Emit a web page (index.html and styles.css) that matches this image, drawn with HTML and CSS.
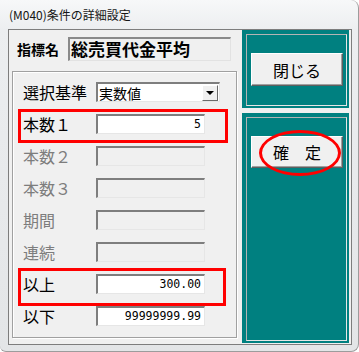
FILE: index.html
```html
<!DOCTYPE html>
<html lang="ja">
<head>
<meta charset="utf-8">
<title>(M040)条件の詳細設定</title>
<link rel="stylesheet" href="styles.css">
</head>
<body>
<div class="window">
  <div class="titlebar">(M040)条件の詳細設定</div>
  <div class="client">
    <div class="left">
      <div class="name-row">
        <span class="name-label">指標名</span>
        <div class="name-field">総売買代金平均</div>
      </div>
      <div class="group">
        <div class="row">
          <span class="label">選択基準</span>
          <div class="combo"><span class="combo-text">実数値</span><span class="drop"><span class="tri"></span></span></div>
        </div>
        <div class="row mark-a">
          <span class="label">本数１</span>
          <div class="field">5</div>
        </div>
        <div class="row">
          <span class="label off">本数２</span>
          <div class="field disabled"></div>
        </div>
        <div class="row">
          <span class="label off">本数３</span>
          <div class="field disabled"></div>
        </div>
        <div class="row">
          <span class="label off">期間</span>
          <div class="field disabled"></div>
        </div>
        <div class="row">
          <span class="label off">連続</span>
          <div class="field disabled"></div>
        </div>
        <div class="row mark-b">
          <span class="label">以上</span>
          <div class="field">300.00</div>
        </div>
        <div class="row">
          <span class="label">以下</span>
          <div class="field">99999999.99</div>
        </div>
      </div>
    </div>
    <div class="right">
      <div class="panel panel-top">
        <div class="panel-inner">
          <button class="btn btn-close">閉じる</button>
        </div>
      </div>
      <div class="panel panel-bottom">
        <div class="panel-inner">
          <button class="btn btn-ok">確　定</button>
          <div class="ellipse"></div>
        </div>
      </div>
    </div>
  </div>
</div>
</body>
</html>
```
FILE: styles.css
```css
* { box-sizing: border-box; }
html, body { margin: 0; padding: 0; }
body {
  width: 359px;
  height: 352px;
  overflow: hidden;
  background: #ffffff;
  font-family: "Noto Sans CJK JP", "Noto Sans", sans-serif;
}
.window {
  width: 359px;
  height: 352px;
  display: flex;
  flex-direction: column;
  background: linear-gradient(#f7f8f9, #eceef0 30px, #e3e5e7);
  border-right: 1px solid #9c9c9c;
  border-bottom: 1px solid #9c9c9c;
  border-radius: 0 8px 8px 6px;
}
.titlebar {
  height: 29px;
  flex: none;
  display: flex;
  align-items: center;
  padding-left: 9px;
  font-size: 12px;
  color: #151515;
}
.client {
  flex: 1;
  display: flex;
  margin: 0 6px 6px 8px;
  background: #f0f0f0;
  border: 1px solid #7d7d7d;
}
.left {
  width: 233px;
  padding-left: 3px;
}
.name-row {
  display: flex;
  align-items: center;
  height: 24px;
  margin-top: 7px;
}
.name-label {
  width: 56px;
  padding-left: 5px;
  font-size: 14px;
  font-weight: 700;
  line-height: 1;
}
.name-field {
  width: 163px;
  height: 24px;
  border-style: solid;
  border-width: 2px 1px 1px 2px;
  border-color: #8a8a8a #e2e2e2 #e2e2e2 #8a8a8a;
  font-size: 17px;
  font-weight: 700;
  line-height: 20px;
  padding-left: 1px;
  color: #000;
}
.group {
  margin-top: 10px;
  width: 225px;
  height: 267px;
  border: 1px solid #a0a0a0;
  box-shadow: inset 1px 1px 0 #ffffff, 1px 1px 0 #ffffff;
  padding-top: 4px;
}
.row {
  position: relative;
  height: 32px;
  display: flex;
  align-items: center;
  padding-left: 10px;
}
.label {
  width: 73px;
  font-size: 16px;
  line-height: 1;
  color: #000;
}
.label.off { color: #7d7d7d; }
.field {
  width: 109px;
  height: 20px;
  background: #ffffff;
  border-style: solid;
  border-width: 2px 1px 1px 2px;
  border-color: #7e7e7e #e6e6e6 #e6e6e6 #7e7e7e;
  font-family: "DejaVu Sans Mono", "Liberation Mono", monospace;
  font-size: 11.5px;
  line-height: 17px;
  text-align: right;
  padding-right: 3px;
  color: #000;
}
.field.disabled { background: #f0f0f0; }
.combo {
  width: 124px;
  height: 20px;
  display: flex;
  align-items: center;
  background: #ffffff;
  border-style: solid;
  border-width: 2px 1px 1px 2px;
  border-color: #7e7e7e #e6e6e6 #e6e6e6 #7e7e7e;
}
.combo-text {
  flex: 1;
  font-size: 14px;
  line-height: 1;
  padding-left: 1px;
}
.drop {
  width: 16px;
  height: 16px;
  margin-right: 1px;
  display: flex;
  align-items: center;
  justify-content: center;
  background: #f0f0f0;
  border-style: solid;
  border-width: 1px;
  border-color: #ffffff #6a6a6a #6a6a6a #ffffff;
}
.tri {
  width: 0;
  height: 0;
  border-left: 4px solid transparent;
  border-right: 4px solid transparent;
  border-top: 4px solid #000;
}
.mark-a::after, .mark-b::after {
  content: "";
  position: absolute;
  border: 3px solid #ff0000;
  left: 5px;
}
.mark-a::after { top: 1px; height: 28px; width: 204px; }
.mark-b::after { top: 0; height: 32px; width: 202px; }
.right {
  width: 107px;
  display: flex;
  flex-direction: column;
}
.panel {
  background: #008080;
  padding: 4px 2px 2px 4px;
}
.panel-top { height: 78px; }
.panel-bottom { flex: 1; margin-top: 5px; margin-bottom: 1px; }
.panel-inner {
  position: relative;
  height: 100%;
  border: 1px solid;
  border-color: #b4b4b4 #e6e6e6 #e6e6e6 #b4b4b4;
  padding-left: 4px;
  padding-top: 18px;
}
.btn {
  display: block;
  width: 92px;
  background: #f0f0f0;
  border: 1px solid;
  border-color: #ffffff #5f5f5f #5f5f5f #ffffff;
  box-shadow: inset -1px -1px 0 #a0a0a0;
  font-family: "Noto Sans CJK JP", sans-serif;
  font-size: 16px;
  line-height: 1;
  color: #000;
  padding: 0;
}
.btn-close { height: 33px; }
.btn-ok { height: 32px; }
.ellipse {
  position: absolute;
  left: 12px;
  top: 12px;
  width: 82px;
  height: 46px;
  border: 3px solid #ff0000;
  border-radius: 50%;
}
```
